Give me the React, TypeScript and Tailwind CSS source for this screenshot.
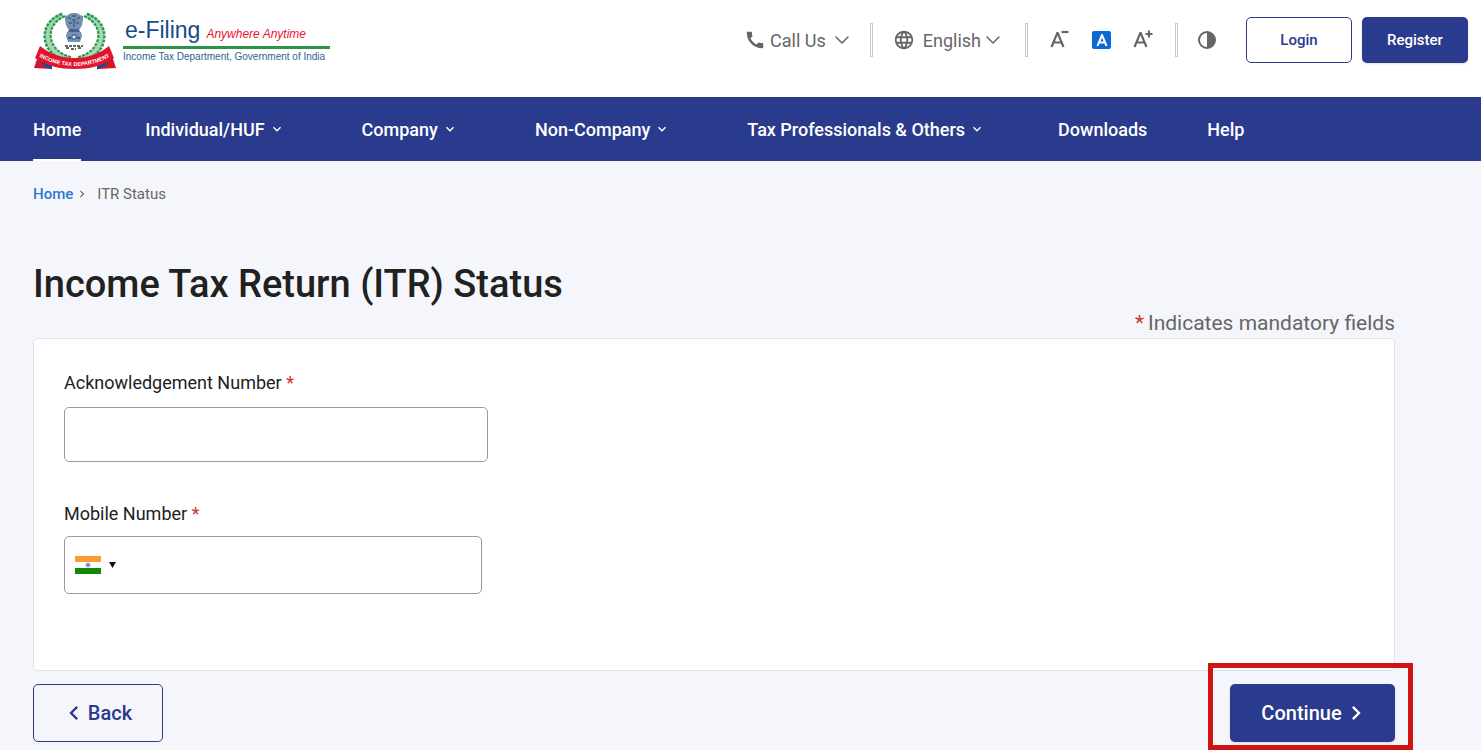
import React from "react";
import { ChevronDown } from "lucide-react";
import { MdCall, MdLanguage, MdExpandMore, MdChevronLeft, MdChevronRight } from "react-icons/md";

const NAV_ITEMS = [
  { label: "Home", menu: false, active: true },
  { label: "Individual/HUF", menu: true, active: false },
  { label: "Company", menu: true, active: false },
  { label: "Non-Company", menu: true, active: false },
  { label: "Tax Professionals & Others", menu: true, active: false },
  { label: "Downloads", menu: false, active: false },
  { label: "Help", menu: false, active: false },
];

function Emblem() {
  return (
    <svg viewBox="0 0 84 60" className="h-15 w-21 shrink-0" aria-hidden="true">
      <g fill="none" strokeLinecap="butt">
        <path d="M30 3 C17 8 12 20 16 31 C19 39 26 45 36 47 M53 3 C66 8 71 20 67 31 C64 39 57 45 47 47" stroke="#9fd8b3" strokeWidth="6" />
        <path d="M29 2 C14 7 9 20 13 32 C16 41 25 47 36 49 M54 2 C69 7 74 20 70 32 C67 41 58 47 47 49" stroke="#2d9850" strokeWidth="2.500" strokeDasharray="3 1.200" />
        <path d="M32 4 C20 9 15 20 19 30 C22 37 28 43 38 45 M51 4 C63 9 68 20 64 30 C61 37 55 43 45 45" stroke="#2d9850" strokeWidth="2.200" strokeDasharray="3 1.200" />
      </g>
      <g fill="#7690b4">
        <path d="M35 3 C37 1 39 1 41 1 C43 1 45 1 47 3 L50 4 L50 8 L49 13 L47 17 H35 L33 13 L32 8 L32 4 Z" />
        <path d="M36 17 H46 L47 20 H35 Z" fill="#43658f" />
        <path d="M34 20 H48 L49 24 L47 30 H35 L33 24 Z" />
        <path d="M35 5 l3 2 M44 7 l3 -2 M39 4 h4 M39 8 h4 M36 11 h3 M43 11 h3 M41 9 v6" stroke="#24486f" strokeWidth="1" />
        <circle cx="41" cy="25" r="2.200" fill="#dce5f0" stroke="#24486f" />
        <path d="M35 26 h3 M44 26 h3" stroke="#24486f" strokeWidth="1.500" />
      </g>
      <path d="M32 34 h18 M33 36 h3 M38 37 h5 M45 36 h4" stroke="#333" strokeWidth="1.500" strokeDasharray="3 1" />
      <path d="M1 56 L5 44 L16 49 L18 57 Z M83 56 L79 44 L67 49 L65 57 Z" fill="#d3152d" />
      <path d="M9 50 L19 53 V57.500 L10 54 Z M74 50 L64 53 V57.500 L73 54 Z" fill="#1f4b8e" />
      <path d="M7 34 C17 42 28 46 41.500 46 C55 46 66 42 76 34 L81 46 C70 54 56 57 41.500 57 C27 57 13 54 2 46 Z" fill="#e2142d" />
      <path id="emblem-arc" d="M3 43 C15 50 27 54 41.500 54 C56 54 68 50 80 43" fill="none" />
      <text fontFamily="Liberation Sans, Arial, sans-serif" fontSize="5.500" fontWeight="700" fill="#fff">
        <textPath href="#emblem-arc" startOffset="50%" textAnchor="middle">INCOME TAX DEPARTMENT</textPath>
      </text>
    </svg>
  );
}

function Logo() {
  return (
    <a href="#" className="flex items-start gap-1.5 font-['Liberation_Sans',Arial,sans-serif]">
      <Emblem />
      <span className="flex flex-col whitespace-nowrap pt-1.5">
        <span className="flex items-baseline gap-1.5 border-b-3 border-[#2b9447] pr-6 pl-0.5 leading-6">
          <span className="text-[23px] text-[#174a8b]">e-Filing</span>
          <span className="text-[12px] italic text-[#ec1232]">Anywhere Anytime</span>
        </span>
        <span className="text-[10px] leading-4 text-[#2d648f]">Income Tax Department, Government of India</span>
      </span>
    </a>
  );
}

function Divider() {
  return <span className="h-8.5 w-[3px] shrink-0 border border-[#c9c9c9]" />;
}

function ContrastIcon() {
  return (
    <svg viewBox="0 0 18 18" className="size-[18px]" aria-hidden="true">
      <circle cx="9" cy="9" r="8" fill="none" stroke="#666" strokeWidth="2" />
      <path d="M9 1 A8 8 0 0 1 9 17 Z" fill="#666" />
    </svg>
  );
}

function LetterIcon({ sign }: { sign: "minus" | "plus" }) {
  return (
    <svg viewBox="0 0 20 20" className="h-5 w-5" fill="none" stroke="#666" strokeWidth="2.200" aria-hidden="true">
      <path d="M1.500 17 L7.300 3 H7.700 L13.500 17 M4 12.500 H11" />
      {sign === "minus" ? <path d="M11.500 2 H18.500" /> : <path d="M12.500 4 H19.500 M16 0.500 V7.500" />}
    </svg>
  );
}

function IndiaFlag() {
  return (
    <svg viewBox="0 0 26 18" className="h-[18px] w-[26px]" aria-hidden="true">
      <path d="M0 0 H26 V6 H0 Z" fill="#ff9a33" />
      <path d="M0 6 H26 V12 H0 Z" fill="#fff" />
      <path d="M0 12 H26 V18 H0 Z" fill="#138808" />
      <circle cx="13" cy="9" r="2.500" fill="#a3a3dc" />
      <circle cx="13" cy="9" r="1" fill="#6d6dc0" />
    </svg>
  );
}

export default function App() {
  return (
    <div className="min-h-screen overflow-x-hidden bg-[#f5f6fb] font-[Roboto,sans-serif] text-[#212121]">
      <header className="flex h-[97px] items-start justify-between bg-white pl-[33px] pr-[13px]">
        <div className="pt-3"><Logo /></div>
        <div className="flex items-center pt-[17px] text-[18px] text-[#666]">
          <button type="button" className="flex items-center">
            <MdCall className="mr-1 size-[22px]" />
            <span>Call Us</span>
            <ChevronDown className="ml-1 size-6" strokeWidth={1.5} />
          </button>
          <span className="w-4" />
          <Divider />
          <span className="w-5" />
          <button type="button" className="flex items-center">
            <MdLanguage className="mr-2 size-[22px]" />
            <span>English</span>
            <ChevronDown className="size-6" strokeWidth={1.5} />
          </button>
          <span className="w-5" />
          <Divider />
          <div className="flex items-center gap-[22px] px-[22px]">
            <button type="button" aria-label="Decrease text size"><LetterIcon sign="minus" /></button>
            <button type="button" aria-label="Normal text size" className="flex h-[18px] w-[19px] items-center justify-center rounded-xs bg-[#0a6bd3]">
              <svg viewBox="0 0 12 12" className="size-3" fill="none" stroke="#fff" strokeWidth="2" aria-hidden="true">
                <path d="M1.500 12 L6 1 L10.500 12 M3 8.500 H9" />
              </svg>
            </button>
            <button type="button" aria-label="Increase text size"><LetterIcon sign="plus" /></button>
          </div>
          <Divider />
          <button type="button" aria-label="Toggle contrast" className="mx-5"><ContrastIcon /></button>
          <div className="ml-2.5 flex gap-2.5 text-[15px] font-medium">
            <button type="button" className="h-[46px] w-[106px] rounded-[5px] border border-[#2a3a8c] bg-white text-[#2a3a8c]">Login</button>
            <button type="button" className="h-[46px] w-[106px] rounded-[5px] bg-[#2a3a8c] text-white shadow-sm">Register</button>
          </div>
        </div>
      </header>

      <nav className="flex h-16 gap-15 bg-[#2a3a8c] pl-[33px] text-[18px] font-medium text-white">
        {NAV_ITEMS.map((item) => (
          <a
            key={item.label}
            href="#"
            className={
              item.active
                ? "flex items-center border-b-2 border-white pt-0.5"
                : item.menu
                  ? "flex items-center pl-1 pr-[13px] whitespace-nowrap"
                  : "flex items-center whitespace-nowrap"
            }
          >
            {item.label}
            {item.menu && <MdExpandMore className="ml-1 size-4" />}
          </a>
        ))}
      </nav>

      <main className="pl-[33px] pr-[86px] pb-2">
        <nav className="flex h-16 items-center gap-0.5 pt-0.5 text-[15px]" aria-label="Breadcrumb">
          <a href="#" className="font-medium text-[#2f78d2]">Home</a>
          <MdChevronRight className="size-3.5 text-[#666]" />
          <span className="pl-1.5 text-[#666]">ITR Status</span>
        </nav>

        <h1 className="pt-[35px] text-[38px] leading-12 font-medium">Income Tax Return (ITR) Status</h1>
        <p className="flex justify-end gap-1 pt-px pb-px text-[21px] leading-7 text-[#666]">
          <span className="text-[#d32f2f]">*</span>
          <span>Indicates mandatory fields</span>
        </p>

        <form id="itr-form" className="rounded-[5px] border border-[#e0e2ef] bg-white px-[30px] pt-8 pb-[76px]">
          <label htmlFor="ack" className="block text-[18px] leading-6">
            Acknowledgement Number <span className="text-[#d32f2f]">*</span>
          </label>
          <input
            id="ack"
            type="text"
            className="mt-3 block h-[55px] w-[424px] rounded-[5px] border border-[#9a9a9a] bg-white px-3 text-[18px] outline-none"
          />
          <label htmlFor="mobile" className="mt-10 block text-[18px] leading-6">
            Mobile Number <span className="text-[#d32f2f]">*</span>
          </label>
          <div className="mt-2.5 flex h-[58px] w-[418px] items-center rounded-[5px] border border-[#9a9a9a] bg-white pl-2.5">
            <button type="button" aria-label="Country code: India" className="flex items-center gap-2">
              <IndiaFlag />
              <svg viewBox="0 0 7 6" className="h-1.5 w-[7px]" aria-hidden="true">
                <path d="M0 0 H7 L3.500 6 Z" fill="#111" />
              </svg>
            </button>
            <input id="mobile" type="tel" className="h-full min-w-0 flex-1 rounded-r-[5px] px-3 text-[18px] outline-none" />
          </div>
        </form>

        <div className="flex justify-between pt-[13px] text-[20px] font-medium">
          <button type="button" className="flex h-[58px] w-[130px] items-center justify-center rounded-[5px] border border-[#2a3a8c] pr-1 text-[#2a3a8c]">
            <MdChevronLeft className="size-7" />
            <span>Back</span>
          </button>
          <div className="relative">
            <button type="submit" form="itr-form" className="flex h-[58px] w-[165px] items-center justify-center rounded-[5px] bg-[#2a3a8c] pl-1.5 text-white shadow-sm">
              <span>Continue</span>
              <MdChevronRight className="size-7" />
            </button>
            <div className="pointer-events-none absolute -top-[21px] -right-[18px] -bottom-2 -left-[22px] border-5 border-[#d01414]" />
          </div>
        </div>
      </main>
    </div>
  );
}
